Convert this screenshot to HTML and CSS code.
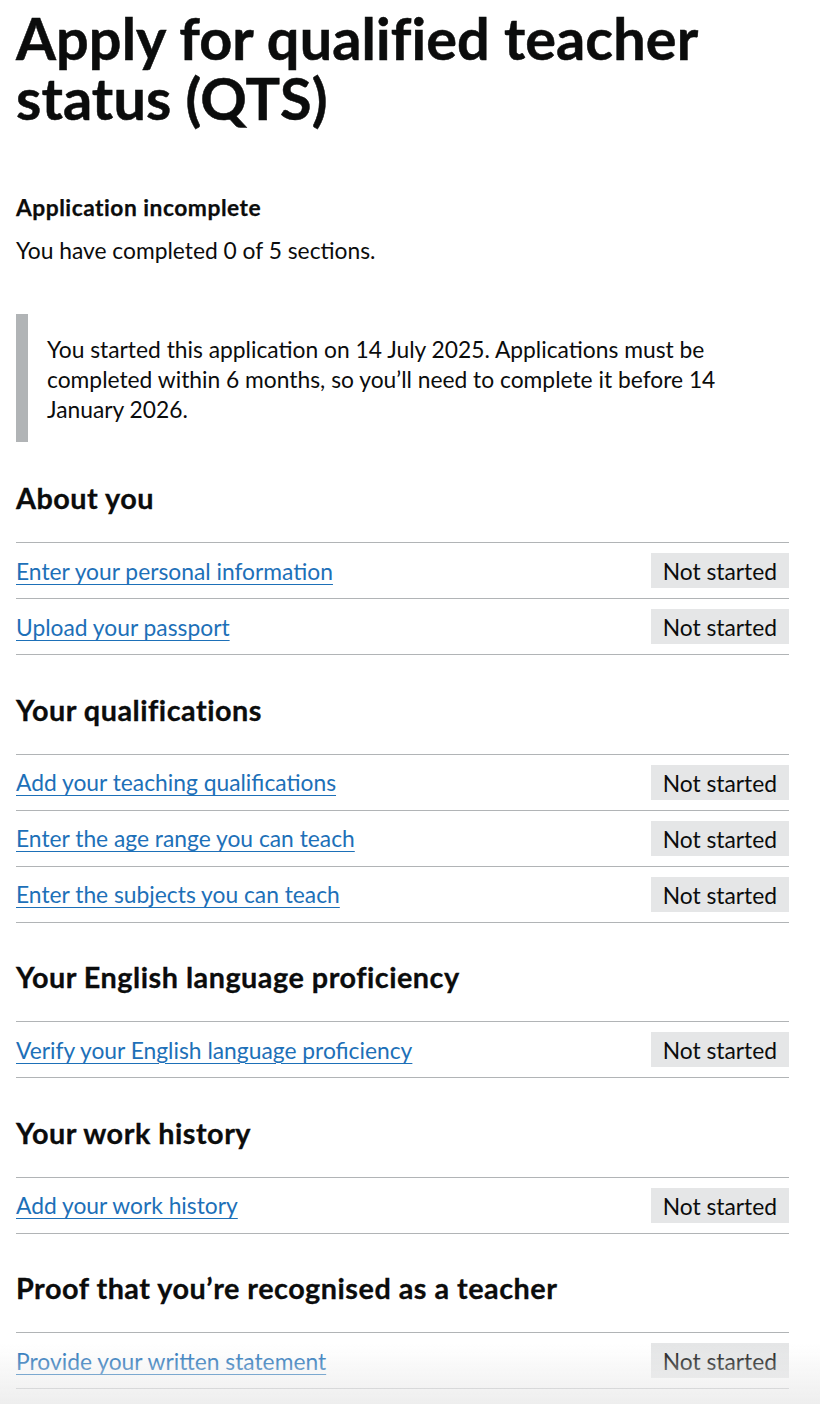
FILE: index.html
```html
<!DOCTYPE html>
<html lang="en">
<head>
<meta charset="utf-8">
<title>Apply for qualified teacher status (QTS)</title>
<link rel="stylesheet" href="styles.css">
</head>
<body>
<main class="page">
  <h1 class="title">Apply for qualified teacher<br>status (QTS)</h1>

  <h2 class="status-heading">Application incomplete</h2>
  <p class="body">You have completed 0 of 5 sections.</p>

  <div class="inset">
    <p class="body">You started this application on 14 July 2025. Applications must be<br>completed within 6 months, so you’ll need to complete it before 14<br>January 2026.</p>
  </div>

  <h2 class="section-heading">About you</h2>
  <ul class="task-list">
    <li class="task"><a class="task-link" href="#">Enter your personal information</a><span class="tag">Not started</span></li>
    <li class="task"><a class="task-link" href="#">Upload your passport</a><span class="tag">Not started</span></li>
  </ul>

  <h2 class="section-heading">Your qualifications</h2>
  <ul class="task-list">
    <li class="task"><a class="task-link" href="#">Add your teaching qualifications</a><span class="tag">Not started</span></li>
    <li class="task"><a class="task-link" href="#">Enter the age range you can teach</a><span class="tag">Not started</span></li>
    <li class="task"><a class="task-link" href="#">Enter the subjects you can teach</a><span class="tag">Not started</span></li>
  </ul>

  <h2 class="section-heading">Your English language proficiency</h2>
  <ul class="task-list">
    <li class="task"><a class="task-link" href="#">Verify your English language proficiency</a><span class="tag">Not started</span></li>
  </ul>

  <h2 class="section-heading">Your work history</h2>
  <ul class="task-list">
    <li class="task"><a class="task-link" href="#">Add your work history</a><span class="tag">Not started</span></li>
  </ul>

  <h2 class="section-heading">Proof that you’re recognised as a teacher</h2>
  <ul class="task-list">
    <li class="task"><a class="task-link" href="#">Provide your written statement</a><span class="tag">Not started</span></li>
  </ul>
</main>
<div class="fade"></div>
</body>
</html>
```

FILE: styles.css
```css
html, body {
  margin: 0;
  padding: 0;
  background: #ffffff;
}

body {
  font-family: Lato, "Noto Sans", Arial, sans-serif;
  color: #0b0c0c;
}

.page {
  padding: 0 31px 40px 16px;
}

.title {
  font-size: 57.6px;
  line-height: 60px;
  font-weight: 700;
  letter-spacing: 0.1px;
  -webkit-text-stroke: 0.5px #0b0c0c;
  margin: 8px 0 64px;
}

.status-heading {
  font-size: 22.8px;
  line-height: 30px;
  font-weight: 700;
  letter-spacing: 0.5px;
  -webkit-text-stroke: 0.25px #0b0c0c;
  margin: 0 0 13px;
}

.body {
  font-size: 22.8px;
  line-height: 30px;
  margin: 0;
}

.inset {
  margin: 49px 0 38px;
  border-left: 12px solid #b1b4b6;
  padding: 20px 18px 18px 19px;
}

.section-heading {
  font-size: 28.8px;
  line-height: 36px;
  font-weight: 700;
  letter-spacing: 0.5px;
  -webkit-text-stroke: 0.3px #0b0c0c;
  margin: 0 0 26px;
}

.task-list {
  list-style: none;
  margin: 0 0 36.5px;
  padding: 0;
  border-top: 1px solid #b1b4b6;
}

.task {
  display: flex;
  align-items: center;
  justify-content: space-between;
  height: 55px;
  border-bottom: 1px solid #b1b4b6;
}

.task-link {
  font-size: 22.8px;
  line-height: 30px;
  color: #1d70b8;
  text-decoration: underline;
  text-decoration-thickness: 1px;
  text-underline-offset: 4px;
}

.tag {
  font-size: 22.8px;
  line-height: 30px;
  background: #e5e6e7;
  color: #0b0c0c;
  padding: 3px 12px 2px;
}

.fade {
  position: fixed;
  left: 0;
  right: 0;
  bottom: 0;
  height: 60px;
  background: linear-gradient(to bottom, rgba(240, 240, 240, 0), rgba(236, 236, 236, 0.9));
  pointer-events: none;
}
```
